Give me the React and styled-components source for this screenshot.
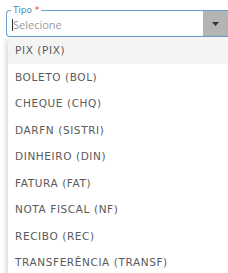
import styled, { createGlobalStyle } from "styled-components";

const GlobalStyle = createGlobalStyle`
  html, body {
    margin: 0;
    padding: 0;
    background: #ffffff;
    overflow: hidden;
  }
  body {
    font-family: "DejaVu Sans", "Open Sans", sans-serif;
  }
`;

const options = [
  "PIX (PIX)",
  "BOLETO (BOL)",
  "CHEQUE (CHQ)",
  "DARFN (SISTRI)",
  "DINHEIRO (DIN)",
  "FATURA (FAT)",
  "NOTA FISCAL (NF)",
  "RECIBO (REC)",
  "TRANSFERÊNCIA (TRANSF)",
];

const App = () => {
  return (
    <Page>
      <GlobalStyle />
      <Field>
        <Box>
          <Legend>
            Tipo <Req>*</Req>
          </Legend>
          <Input>
            <Caret />
            <Placeholder>Selecione</Placeholder>
          </Input>
          <ArrowBtn>
            <svg width="7" height="4" viewBox="0 0 7 4">
              <path d="M0 0 L7 0 L3.5 4 Z" fill="#333" />
            </svg>
          </ArrowBtn>
        </Box>
        <Menu>
          {options.map((o, i) => (
            <Item key={o} $active={i === 0}>
              {o}
            </Item>
          ))}
        </Menu>
      </Field>
    </Page>
  );
};

export default App;

const Page = styled.div`
  width: 228px;
  height: 273px;
  padding: 10px 0 0 6px;
  box-sizing: border-box;
  overflow: hidden;
`;

const Field = styled.div`
  position: relative;
  width: 222px;
`;

const Box = styled.div`
  position: relative;
  display: flex;
  align-items: stretch;
  height: 27px;
  padding-left: 5px;
  border: 1px solid #6a9fd3;
  border-right: none;
  border-radius: 4px 0 0 4px;
  box-sizing: border-box;
`;

const Legend = styled.span`
  position: absolute;
  top: -6px;
  left: 4px;
  font-size: 9px;
  line-height: 10px;
  color: #4a8ad0;
  padding: 0 2px;
  background: #fff;
`;

const Req = styled.span`
  color: #e53935;
`;

const Input = styled.div`
  flex: 1;
  display: flex;
  align-items: center;
  padding-top: 2px;
`;

const Caret = styled.span`
  width: 1px;
  height: 12px;
  background: #333;
`;

const Placeholder = styled.span`
  font-size: 11px;
  color: #9a9a9a;
  font-family: "Open Sans", sans-serif;
`;

const ArrowBtn = styled.div`
  width: 25px;
  background: #b4b4b4;
  display: flex;
  align-items: center;
  justify-content: center;
`;

const Menu = styled.ul`
  position: absolute;
  top: 27px;
  left: 2px;
  right: 0;
  margin: 0;
  padding: 0;
  list-style: none;
  background: #fff;
  box-shadow: -2px 2px 5px rgba(0, 0, 0, 0.15);
`;

const Item = styled.li`
  height: 26.5px;
  display: flex;
  align-items: center;
  padding-left: 7px;
  font-size: 10.5px;
  letter-spacing: 0.6px;
  color: #5a5a5a;
  background: ${(p) => (p.$active ? "#f4f4f4" : "#fff")};
`;
